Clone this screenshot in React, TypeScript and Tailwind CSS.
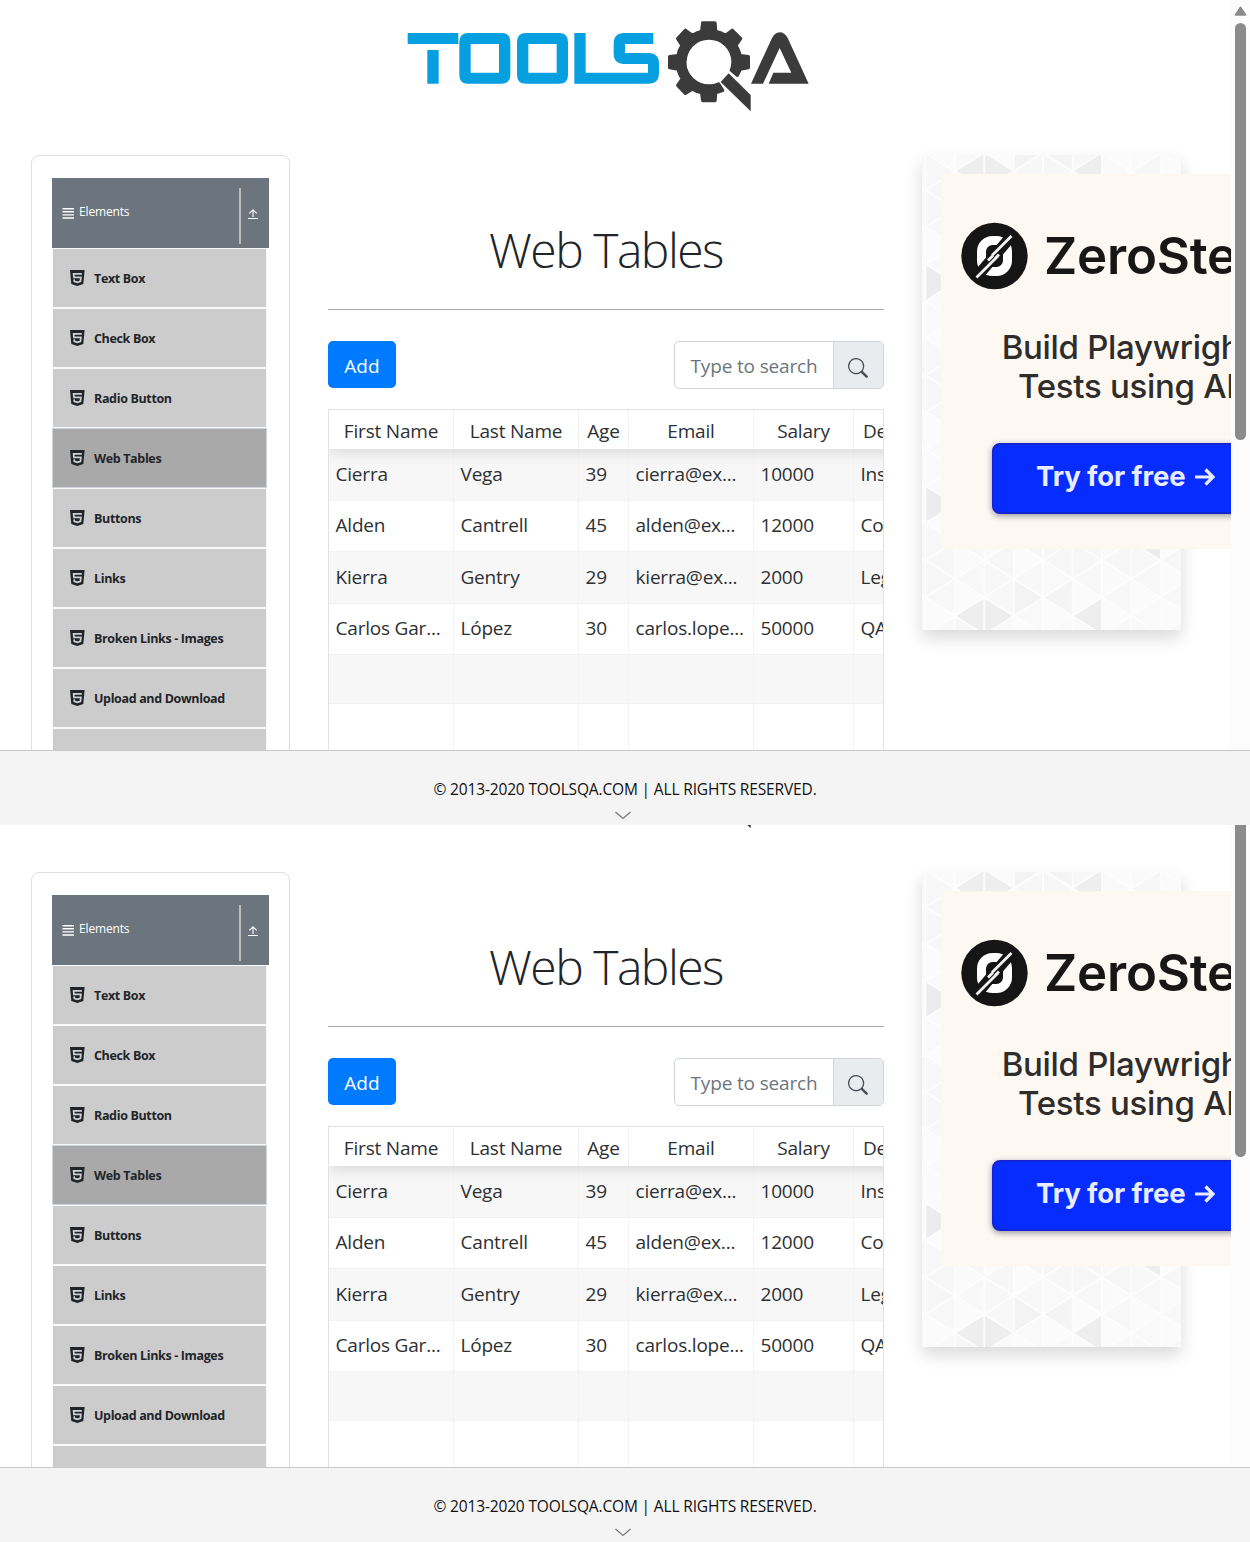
import React from "react";

const navItems = [
  "Text Box",
  "Check Box",
  "Radio Button",
  "Web Tables",
  "Buttons",
  "Links",
  "Broken Links - Images",
  "Upload and Download",
  "",
];

const headings = ["First Name", "Last Name", "Age", "Email", "Salary", "De"];

const records = [
  { height: "h-[52px]", pad: "pt-[11px]", cells: ["Cierra", "Vega", "39", "cierra@ex...", "10000", "Ins"] },
  { height: "h-[51px]", pad: "pt-[10px]", cells: ["Alden", "Cantrell", "45", "alden@ex...", "12000", "Co"] },
  { height: "h-[52px]", pad: "pt-[11px]", cells: ["Kierra", "Gentry", "29", "kierra@ex...", "2000", "Leg"] },
  { height: "h-[51px]", pad: "pt-[10px]", cells: ["Carlos Gar...", "López", "30", "carlos.lope...", "50000", "QA"] },
  { height: "h-[49px]", pad: "pt-[10px]", cells: ["", "", "", "", "", ""] },
  { height: "h-[49px]", pad: "pt-[10px]", cells: ["", "", "", "", "", ""] },
];

const columns = "grid grid-cols-[125px_125px_50px_125px_100px_125px]";

function Logo() {
  return (
    <svg width="430" height="110" viewBox="0 0 1290 330" className="ml-[395px] block">
      <g fill="#069fdf">
        <path d="M38 69H190V102H38ZM97 120H131V221H97Z" />
        <path fillRule="evenodd" d="M220 69H319Q346 69 346 96V194Q346 221 319 221H220Q193 221 193 194V96Q193 69 220 69ZM227 102V188H312V102Z" />
        <path fillRule="evenodd" d="M393 69H492Q519 69 519 96V194Q519 221 492 221H393Q366 221 366 194V96Q366 69 393 69ZM400 102V188H485V102Z" />
        <path d="M538 69H572V188H759V162H684Q656 160 656 132V101Q656 69 688 69H775V102H690V129H762Q792 130 792 160V190Q792 221 762 221H538Z" />
      </g>
      <g fill="#3b3b3c">
        <path
          stroke="#3b3b3c"
          strokeWidth="10"
          strokeLinejoin="round"
          d="M923 39H960L962 64Q980 68 992 76L1012 61L1037 86L1023 106Q1031 119 1036 137L1060 140V173L1036 177L1027 196L1004 176Q1018 130 984 103Q943 76 902 100Q865 129 871 173Q884 215 925 223Q954 225 968 218L983 241L962 248L960 272H923L920 248Q905 245 892 237L871 250L848 226L862 206Q852 192 849 177L824 173V140L849 137Q852 119 861 106L848 86L871 61L892 76Q905 68 920 64Z"
        />
        <circle cx="942" cy="156" r="67" fill="#fff" />
        <path d="M1001 190L1067 255V304L977 216Z" stroke="#fff" strokeWidth="7" />
        <path d="M1001 190L1067 255V304L977 216Z" />
        <path d="M1068 221L1130 86Q1140 67 1154 67Q1169 67 1178 84L1241 221H1121L1135 188H1189L1154 114L1104 221Z" />
      </g>
    </svg>
  );
}

function Html5Icon() {
  return (
    <svg width="15" height="16" viewBox="0 0 15 16" className="shrink-0">
      <path fill="#212529" d="M0 0H14.6L13.3 14L7.3 16L1.3 14Z" />
      <path fill="none" stroke="#d0d0d0" strokeWidth="1.7" d="M11.9 3.8H3.6L3.9 7.4H10.9L10.4 11.4L7.3 12.4L4.3 11.4L4.1 9.4" />
    </svg>
  );
}

function Sidebar() {
  return (
    <aside className="h-[900px] w-[259px] shrink-0 rounded-lg border border-[#dfdfdf] pt-[22px] pl-5">
      <div className="flex h-[70px] w-[217px] items-center bg-[#6c757d] pl-[10px] text-white">
        <svg width="12" height="12" viewBox="0 0 12 12">
          <path d="M.5 1.7H12M.5 4.8H12M.5 7.9H12M.5 11H12" stroke="#fff" strokeWidth="1.4" />
        </svg>
        <span className="ml-[5px] -mt-[2px] w-[160px] text-[12px] tracking-[-0.15px]">Elements</span>
        <span className="mt-[6px] h-14 w-[2px] bg-[#bdbdbd]" />
        <svg width="10" height="12" viewBox="0 0 10 12" className="mt-px ml-[7px]">
          <path d="M0 10.5H10M5 9V2M1.3 5.3L5 1.8L8.7 5.3" fill="none" stroke="#fff" strokeWidth="1.1" />
        </svg>
      </div>
      <ul className="w-[215px]">
        {navItems.map((label, i) => (
          <li
            key={i}
            className={
              label === "Web Tables"
                ? "flex h-[60px] items-center border border-[#ced4da] bg-[#a9a9a9] pl-[17px]"
                : "flex h-[60px] items-center border border-[#f8f9fa] bg-[#cccccc] pl-[17px]"
            }
          >
            {label && <Html5Icon />}
            <span className="mt-[2px] ml-[9px] text-[12.5px] font-bold tracking-[-0.35px] whitespace-nowrap">{label}</span>
          </li>
        ))}
      </ul>
    </aside>
  );
}

function SearchIcon() {
  return (
    <svg width="20" height="20" viewBox="0 0 16 16" fill="#495057" className="mt-[5px]">
      <path d="M11.742 10.344a6.5 6.5 0 1 0-1.397 1.398l3.85 3.85a1 1 0 0 0 1.415-1.414l-3.85-3.85zM12 6.5a5.5 5.5 0 1 1-11 0 5.5 5.5 0 0 1 11 0" />
    </svg>
  );
}

function WebTable() {
  return (
    <main className="ml-[38px] w-[556px] shrink-0 pt-[60px]">
      <h1 className="flex h-[70px] items-center justify-center text-[48px] font-light tracking-[-1.5px] whitespace-nowrap">
        Web Tables
      </h1>
      <div className="mt-6 h-px bg-[#a8aaab]" />
      <div className="mt-[31px] flex justify-between text-[19px]">
        <button className="h-[47px] w-[68px] rounded-[5px] bg-[#007bff] pt-[3px] text-white">Add</button>
        <div className="flex h-12 w-[210px] overflow-hidden rounded-[5px] border border-[#ced4da]">
          <div className="flex w-[159px] items-center border-r border-[#ced4da] pt-[3px] pl-[15.5px] tracking-[-0.15px] whitespace-nowrap text-[#6c757d]">
            Type to search
          </div>
          <div className="flex flex-1 items-center justify-center bg-[#e9ecef] pr-px">
            <SearchIcon />
          </div>
        </div>
      </div>
      <div className="mt-5 h-[600px] overflow-hidden border border-[#e2e2e2] text-[19px] tracking-[-0.2px] text-[#2d3033]">
        <div className={"relative h-[39px] w-[650px] bg-white shadow-[0_2px_15px_0_rgba(0,0,0,0.15)] " + columns}>
          {headings.map((h, i) => (
            <div
              key={h}
              className={
                i === 5
                  ? "flex items-center pt-1 pl-[9px]"
                  : "flex items-center justify-center border-r border-[#f2f2f2] pt-1"
              }
            >
              {h}
            </div>
          ))}
        </div>
        {records.map((row, i) => (
          <div
            key={i}
            className={
              columns + " w-[650px] border-b border-[#f2f2f2] " + row.height + (i % 2 === 0 ? " bg-[#f7f7f7]" : " bg-white")
            }
          >
            {row.cells.map((cell, j) => (
              <div key={j} className={"border-r border-[#f4f4f4] pl-[6.5px] leading-[29px] whitespace-nowrap " + row.pad}>
                {cell}
              </div>
            ))}
          </div>
        ))}
      </div>
    </main>
  );
}

/* Faint triangular mesh behind the advert */
function Mesh() {
  const w = 29.4;
  const step = 37;
  const shades = ["#f8f8f8", "#fafafa", "#f7f7f7", "#f9f9f9", "#fbfbfb"];
  const triangles: React.ReactNode[] = [];
  for (let k = -1; k < 9; k++) {
    const x = 3.6 + k * w;
    const even = Math.abs(k) % 2 === 0;
    for (let m = -1; m < 14; m++) {
      const y = (even ? 35.3 : 16.7) + (m - 1) * step;
      const mid = y + 18.5;
      const shade = shades[Math.abs(k * 3 + m * 7 + k * m) % 5];
      const shade2 = shades[Math.abs(k * 5 + m * 3 + 2) % 5];
      triangles.push(
        <polygon key={`r${k}-${m}`} points={`${x},${y} ${x},${y + step} ${x + w},${mid}`} fill={shade} />,
        <polygon key={`l${k}-${m}`} points={`${x + w},${mid} ${x + w},${mid + step} ${x},${y + step}`} fill={shade2} />,
      );
    }
  }
  const vx = (k: number) => 3.6 + k * w;
  const dark = [16, 461].map((y) => (
    <g key={y}>
      <polygon points={`${vx(1)},${y} ${vx(2)},${y - 18.5} ${vx(2)},${y + 18.5}`} fill="#eeeeee" />
      <polygon points={`${vx(3)},${y} ${vx(2)},${y - 18.5} ${vx(2)},${y + 18.5}`} fill="#eeeeee" />
      <polygon points={`${vx(5)},${y} ${vx(6)},${y - 18.5} ${vx(6)},${y + 18.5}`} fill="#eeeeee" />
      <polygon points={`${vx(4)},${y - 18.5} ${vx(3)},${y - 37} ${vx(3)},${y}`} fill="#f3f3f3" />
      <polygon points={`${vx(4)},${y - 18.5} ${vx(5)},${y - 37} ${vx(5)},${y}`} fill="#f4f4f4" />
    </g>
  ));
  return (
    <svg width="259" height="475" viewBox="0 0 259 475" className="block">
      <rect width="259" height="475" fill="#fdfdfd" />
      <g stroke="#fdfdfd" strokeWidth="1.6">
        {triangles}
        {dark}
        <polygon points="3.6,109 3.6,146 33,127.5" fill="#ececec" />
        <polygon points="3.6,331 3.6,368 33,349.5" fill="#ececec" />
        <polygon points="209.4,387 238.8,368.5 238.8,405.5" fill="#ededed" />
      </g>
    </svg>
  );
}

function Advert() {
  return (
    <aside className="relative ml-[38px] h-[475px] w-[259px] shrink-0 shadow-[0_8px_16px_rgba(0,0,0,0.15)]">
      <Mesh />
      <div className="absolute top-[19px] left-[19px] h-[375px] w-[375px] bg-[#fdf8f2] font-['Inter'] text-[#2f2d2b]">
        <div className="flex items-center pt-12 pl-5">
          <svg width="67" height="68" viewBox="0 0 67 68">
            <circle cx="33.5" cy="34" r="33.2" fill="#151515" />
            <rect x="20.5" y="18.5" width="26" height="31" rx="11" fill="none" stroke="#fff" strokeWidth="9" />
            <path d="M14 57L53 11" stroke="#151515" strokeWidth="11" />
            <path d="M15.5 55.5L37 34M31 33.5L50.5 14M27 38.5L32 33.5M34 36.5L38 32.5" stroke="#f2f2f2" strokeWidth="2.8" />
          </svg>
          <span className="ml-4 text-[51px] leading-[68px] font-semibold tracking-[-0.2px] whitespace-nowrap text-[#181716]">
            ZeroStep
          </span>
        </div>
        <div className="mt-[38px] -ml-[2px] w-[375px] text-center text-[33px] leading-[39px] font-medium tracking-[-0.3px] whitespace-nowrap">
          <div>Build Playwright</div>
          <div>Tests using AI</div>
        </div>
        <div className="mt-[37px] ml-[51px] flex h-[71px] w-[272px] items-center rounded-lg border-2 border-[#1424d2] bg-[#062cff] pb-[3px] pl-[42px] text-[27.5px] font-bold tracking-[-0.1px] whitespace-nowrap text-[#e9ecff] shadow-[0_2px_6px_rgba(30,30,60,0.45)]">
          Try for free
          <svg width="22" height="20" viewBox="0 0 22 20" className="ml-[9px]">
            <path d="M1 10H19M11.5 2.5L19 10L11.5 17.5" fill="none" stroke="#e9ecff" strokeWidth="3.2" />
          </svg>
        </div>
      </div>
    </aside>
  );
}

function Page() {
  return (
    <div className="h-[825px] w-[1250px] overflow-hidden bg-white text-[#212529]">
      <div className="flex h-[750px] overflow-hidden">
        <div className="w-[1231px] shrink-0 overflow-hidden">
          <header className="h-[155px] pt-[10px]">
            <Logo />
          </header>
          <div className="flex items-start pl-[31px]">
            <Sidebar />
            <WebTable />
            <Advert />
          </div>
        </div>
        <div className="flex w-[19px] flex-col items-center bg-[#fcfcfc] pt-[6px]">
          <svg width="13" height="10" viewBox="0 0 13 10">
            <path d="M6.5 1.2L11.6 9H1.4Z" fill="#8b8b8b" stroke="#8b8b8b" strokeWidth="1.5" strokeLinejoin="round" />
          </svg>
          <div className="mt-[7px] h-[417px] w-[11px] rounded-full bg-[#8b8b8b]" />
        </div>
      </div>
      <footer className="flex h-[75px] flex-col items-center border-t border-[#c8c8c8] bg-[#f4f4f4] pt-[26px]">
        <div className="text-[15.5px] leading-6 tracking-[-0.15px] whitespace-nowrap text-[#111]">
          © 2013-2020 TOOLSQA.COM | ALL RIGHTS RESERVED.
        </div>
        <svg width="16" height="9" viewBox="0 0 16 9" className="mt-[10px] mr-[4px]">
          <path d="M.5 1L8 7.5L15.5 1" fill="none" stroke="#777" strokeWidth="1.2" />
        </svg>
      </footer>
    </div>
  );
}

export default function App() {
  return (
    <div className="h-[1542px] w-[1250px] overflow-hidden bg-white font-['Open_Sans','Noto_Sans',sans-serif]">
      <Page />
      <div className="h-[717px] overflow-hidden">
        <div className="-mt-[108px]">
          <Page />
        </div>
      </div>
    </div>
  );
}
